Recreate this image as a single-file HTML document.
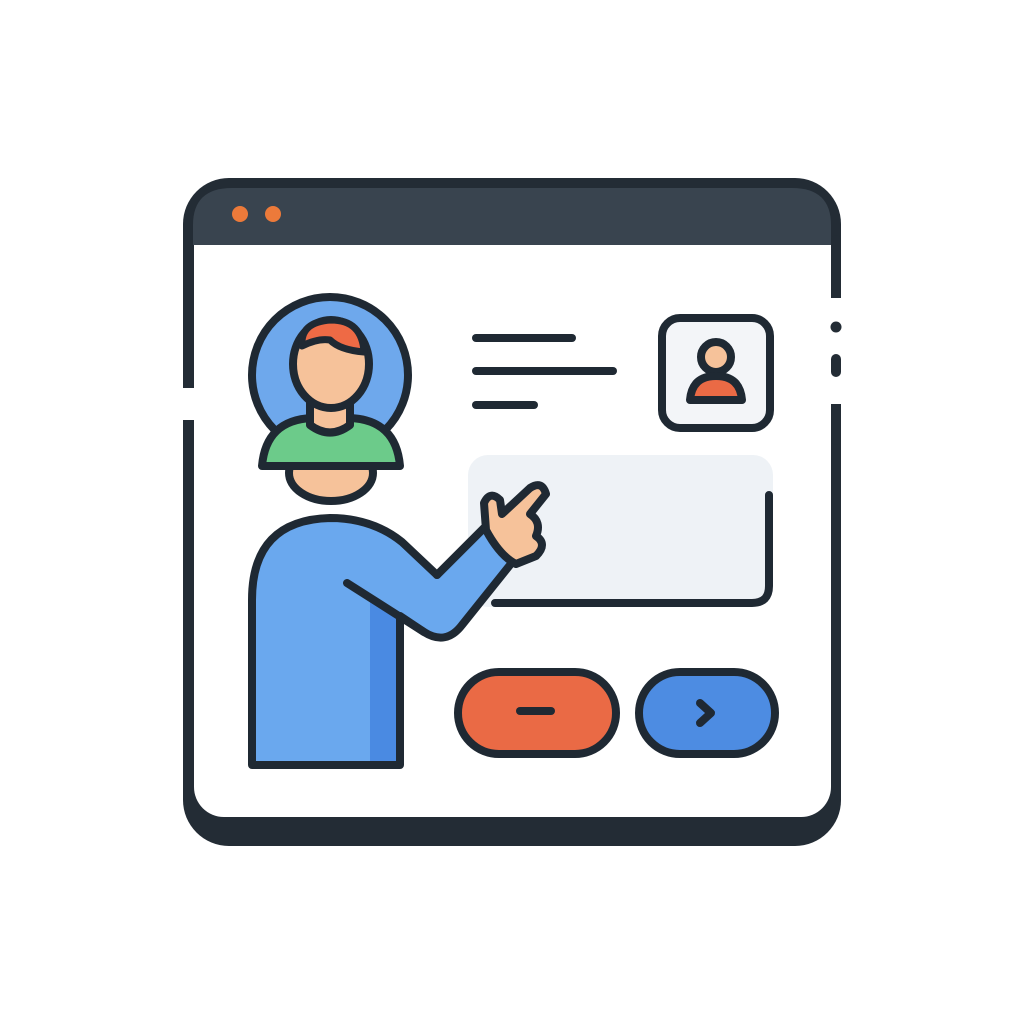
<!DOCTYPE html>
<html><head><style>html,body{margin:0;padding:0;background:#fff}svg{display:block}</style></head><body>
<svg width="1024" height="1024" viewBox="0 0 1024 1024" xmlns="http://www.w3.org/2000/svg">
<rect width="1024" height="1024" fill="#fff"/>
<rect x="183" y="178" width="658" height="668" rx="46" fill="#232c35"/>
<path d="M193 245 V225 Q193 188 232 188 H792 Q831 188 831 225 V245 Z" fill="#39444f"/>
<rect x="194" y="245" width="637" height="572" rx="30" fill="#fff"/>
<rect x="194" y="245" width="637" height="40" fill="#fff"/>
<rect x="180" y="388" width="16" height="32" fill="#fff"/>
<rect x="828" y="298" width="16" height="106" fill="#fff"/>
<circle cx="836" cy="327" r="5.5" fill="#232c35"/>
<line x1="836" y1="359" x2="836" y2="372" stroke="#232c35" stroke-width="10" stroke-linecap="round"/>
<line x1="188" y1="290" x2="188" y2="382" stroke="#232c35" stroke-width="10" stroke-linecap="round"/>
<line x1="188" y1="425" x2="188" y2="440" stroke="#232c35" stroke-width="10" stroke-linecap="round"/>
<line x1="836" y1="240" x2="836" y2="292" stroke="#232c35" stroke-width="10" stroke-linecap="round"/>
<line x1="836" y1="409" x2="836" y2="440" stroke="#232c35" stroke-width="10" stroke-linecap="round"/>
<circle cx="240" cy="214" r="8" fill="#ec7a3a"/>
<circle cx="273" cy="214" r="8" fill="#ec7a3a"/>
<g stroke="#1f2933" stroke-width="8" stroke-linecap="round" stroke-linejoin="round">
<line x1="476" y1="338" x2="572" y2="338"/>
<line x1="476" y1="371" x2="613" y2="371"/>
<line x1="476" y1="405" x2="534" y2="405"/>
<rect x="662" y="318" width="108" height="110" rx="18" fill="#f3f5f8"/>
<circle cx="716" cy="357" r="15" fill="#f6c29a"/>
<path d="M690 400 Q692 376 716 376 Q740 376 742 400 Z" fill="#ea6a45"/>
</g>
<rect x="468" y="455" width="305" height="152" rx="20" fill="#eef2f6"/>
<path d="M769 495 V586 Q769 603 752 603 H495" fill="none" stroke="#1f2933" stroke-width="8" stroke-linecap="round"/>
<g stroke="#1f2933" stroke-width="8" stroke-linecap="round" stroke-linejoin="round">
<circle cx="330" cy="375" r="78" fill="#6ea8ec"/>
<ellipse cx="331" cy="473" rx="42" ry="28" fill="#f6c29a"/>
<path d="M262 466 Q266 420 312 418 H350 Q396 420 400 466 Z" fill="#6ccb8a"/>
<path d="M310 400 V425 Q330 440 350 425 V400 Z" fill="#f6c29a"/>
<ellipse cx="331" cy="364" rx="38" ry="44" fill="#f6c29a"/>
<path d="M302 346 Q300 322 331 320 Q362 320 364 352 Q340 350 330 340 Q318 338 302 346 Z" fill="#ee6a45" stroke-width="7"/>
</g>
<path d="M252 765 V600 Q252 520 330 518 Q372 518 402 542 L437 575 L484 528 L514 560 L462 625 Q446 646 424 632 L400 616 V765 Z" fill="#6aa8ee"/>
<path d="M370 600 L398 616 V762 H370 Z" fill="#4a8ae2"/>
<g stroke="#1f2933" stroke-width="8" stroke-linecap="round" stroke-linejoin="round" fill="none">
<path d="M437 575 L484 528"/>
<path d="M514 560 L462 625 Q446 646 424 632 L400 616 V765 H252 V600 Q252 520 330 518 Q372 518 402 542 L437 575"/>
<line x1="347" y1="583" x2="424" y2="632"/>
<path d="M486 530 L484 503 Q490 490 500 500 L502 514 L530 488 Q542 480 546 494 L530 514 Q542 522 536 536 Q548 544 536 556 L516 564 Q500 556 486 530 Z" fill="#f6c29a"/>
<rect x="458" y="672" width="158" height="82" rx="41" fill="#ea6a45"/>
<line x1="520" y1="711" x2="551" y2="711"/>
<rect x="639" y="672" width="136" height="82" rx="41" fill="#4d8ce2"/>
<path d="M700 703 L711 713 L700 723"/>
</g>
</svg>
</body></html>
